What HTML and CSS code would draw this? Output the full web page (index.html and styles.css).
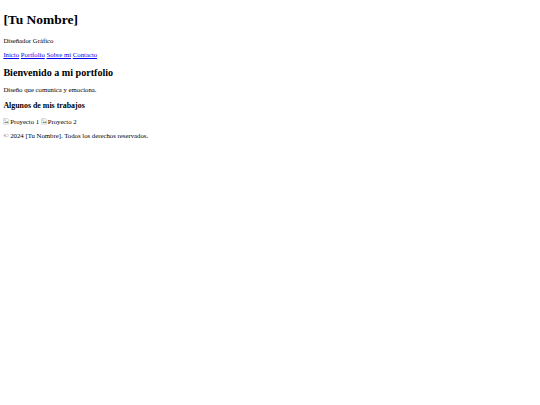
FILE: index.html
```html
<!DOCTYPE html>
<html lang="es">
<head>
<meta charset="utf-8">
<title>[Tu Nombre] - Portfolio</title>
<link rel="stylesheet" href="styles.css">
</head>
<body>
<header>
  <h1>[Tu Nombre]</h1>
  <p>Diseñador Gráfico</p>
  <nav>
    <a href="#">Inicio</a>
    <a href="#">Portfolio</a>
    <a href="#">Sobre mí</a>
    <a href="#">Contacto</a>
  </nav>
</header>
<main>
  <section>
    <h2>Bienvenido a mi portfolio</h2>
    <p>Diseño que comunica y emociona.</p>
  </section>
  <section>
    <h3>Algunos de mis trabajos</h3>
    <div class="gallery"><span class="broken"><svg class="icon" viewBox="0 0 16 16"><path d="M1.5 1.5h9l3 3v10h-12z" fill="#fff" stroke="#999"/><path d="M3 12l3-4 2 2 2-3 3 5z" fill="#6a9a4a"/><circle cx="5" cy="5" r="1.3" fill="#4a90d9"/></svg>Proyecto 1</span> <span class="broken"><svg class="icon" viewBox="0 0 16 16"><path d="M1.5 1.5h9l3 3v10h-12z" fill="#fff" stroke="#999"/><path d="M3 12l3-4 2 2 2-3 3 5z" fill="#6a9a4a"/><circle cx="5" cy="5" r="1.3" fill="#4a90d9"/></svg>Proyecto 2</span></div>
  </section>
</main>
<footer>
  <p>© 2024 [Tu Nombre]. Todos los derechos reservados.</p>
</footer>
</body>
</html>
```

FILE: styles.css
```css
html {
  background: #fff;
}
body {
  margin: 3.375px;
  font-family: "Liberation Serif", "Times New Roman", serif;
  font-size: 6.75px;
  color: #000;
}
h1 {
  font-size: 13.5px;
  margin: 9.045px 0;
}
h2 {
  font-size: 10.125px;
  margin: 8.4px 0;
}
h3 {
  font-size: 7.9px;
  margin: 7.9px 0;
}
p {
  margin: 6.75px 0;
}
a {
  color: #0000ee;
}
.broken {
  display: inline-block;
}
.icon {
  width: 6.75px;
  height: 6.75px;
  vertical-align: -1px;
}
```
